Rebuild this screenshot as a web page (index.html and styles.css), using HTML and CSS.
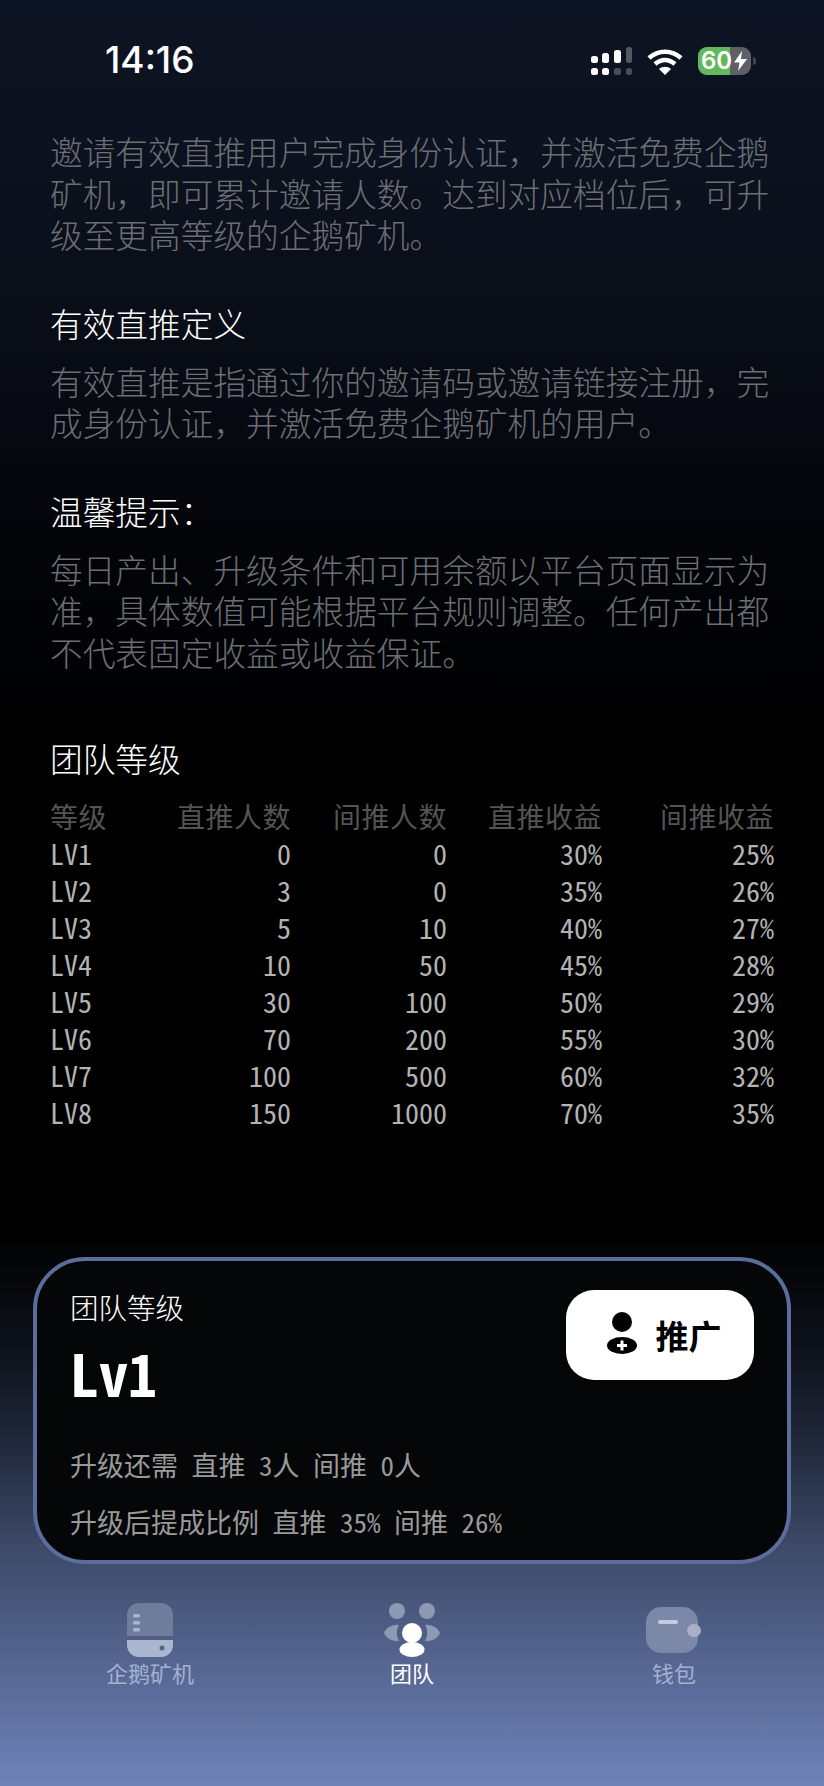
FILE: index.html
```html
<!DOCTYPE html>
<html lang="zh-CN">
<head>
    <meta charset="UTF-8">
    <meta name="viewport" content="width=device-width, initial-scale=1.0">
    <title>团队等级</title>
    <link rel="stylesheet" href="styles.css">
</head>
<body>

<!-- Status bar -->
<header class="status-bar">
    <span class="time">14:16</span>
    <div class="status-icons">
        <svg class="signal" width="42" height="29" viewBox="0 0 42 29">
            <rect x="0" y="9" width="7" height="7" rx="2.5" fill="#fff"/>
            <rect x="11" y="6" width="7" height="10" rx="2.5" fill="#fff"/>
            <rect x="23" y="3" width="7" height="13" rx="2.5" fill="#fff"/>
            <rect x="35" y="0" width="6" height="16" rx="2.5" fill="#555862"/>
            <rect x="0" y="21" width="7" height="7" rx="2.5" fill="#fff"/>
            <rect x="11" y="21" width="7" height="7" rx="2.5" fill="#fff"/>
            <rect x="23" y="21" width="7" height="7" rx="2.5" fill="#4a4d56"/>
            <rect x="35" y="21" width="6" height="7" rx="2.5" fill="#4a4d56"/>
        </svg>
        <svg class="wifi" width="36" height="27" viewBox="0 0 36 27">
            <path d="M2 10 C11 1.500 25 1.500 34 10" fill="none" stroke="#fff" stroke-width="4.500"/>
            <path d="M8 16 C14 10.500 22 10.500 28 16" fill="none" stroke="#fff" stroke-width="4.500"/>
            <path d="M12 21 L18 27 L24 21 C20.500 18 15.500 18 12 21 Z" fill="#fff"/>
        </svg>
        <div class="battery">
            <div class="battery-level">60</div>
            <svg class="bolt" width="13" height="20" viewBox="0 0 13 20">
                <path d="M8 0 L0 11.500 H5.500 L4 20 L13 8 H7 Z" fill="#fff"/>
            </svg>
        </div>
        <span class="battery-nub"></span>
    </div>
</header>

<!-- Rules text -->
<main class="content">
    <p class="para">邀请有效直推用户完成身份认证，并激活免费企鹅矿机，即可累计邀请人数。达到对应档位后，可升级至更高等级的企鹅矿机。</p>

    <h3 class="sub-title">有效直推定义</h3>
    <p class="para">有效直推是指通过你的邀请码或邀请链接注册，完成身份认证，并激活免费企鹅矿机的用户。</p>

    <h3 class="sub-title">温馨提示：</h3>
    <p class="para">每日产出、升级条件和可用余额以平台页面显示为准，具体数值可能根据平台规则调整。任何产出都不代表固定收益或收益保证。</p>

    <h3 class="table-title">团队等级</h3>
    <div class="level-table">
        <div class="row head"><span>等级</span><span>直推人数</span><span>间推人数</span><span>直推收益</span><span>间推收益</span></div>
        <div class="row"><span>LV1</span><span>0</span><span>0</span><span>30%</span><span>25%</span></div>
        <div class="row"><span>LV2</span><span>3</span><span>0</span><span>35%</span><span>26%</span></div>
        <div class="row"><span>LV3</span><span>5</span><span>10</span><span>40%</span><span>27%</span></div>
        <div class="row"><span>LV4</span><span>10</span><span>50</span><span>45%</span><span>28%</span></div>
        <div class="row"><span>LV5</span><span>30</span><span>100</span><span>50%</span><span>29%</span></div>
        <div class="row"><span>LV6</span><span>70</span><span>200</span><span>55%</span><span>30%</span></div>
        <div class="row"><span>LV7</span><span>100</span><span>500</span><span>60%</span><span>32%</span></div>
        <div class="row"><span>LV8</span><span>150</span><span>1000</span><span>70%</span><span>35%</span></div>
    </div>
</main>

<!-- Level card -->
<section class="level-card">
    <div class="card-top">
        <div>
            <div class="card-label">团队等级</div>
            <div class="card-level">Lv1</div>
        </div>
        <button class="promote-btn">
            <svg width="32" height="46" viewBox="0 0 32 46">
                <circle cx="16" cy="10" r="10" fill="#000"/>
                <ellipse cx="16" cy="33.500" rx="15" ry="8.500" fill="#000"/>
                <path d="M16 28.500 V38.500 M11 33.500 H21" stroke="#fff" stroke-width="3"/>
            </svg>
            <span>推广</span>
        </button>
    </div>
    <p class="card-line">升级还需 直推 3人 间推 0人</p>
    <p class="card-line">升级后提成比例 直推 35% 间推 26%</p>
</section>

<!-- Tab bar -->
<nav class="tabs">
    <a class="tab">
        <svg width="46" height="54" viewBox="0 0 46 54">
            <path d="M12 0 H34 A12 12 0 0 1 46 12 V33 H0 V12 A12 12 0 0 1 12 0 Z" fill="#6f7c9c"/>
            <path d="M0 37 H46 V42 A12 12 0 0 1 34 54 H12 A12 12 0 0 1 0 42 Z" fill="#aab6cf"/>
            <rect x="6" y="11" width="7" height="3.500" rx="1.500" fill="#aab6cf"/>
            <rect x="6" y="18" width="7" height="3.500" rx="1.500" fill="#aab6cf"/>
            <rect x="6" y="25" width="7" height="3.500" rx="1.500" fill="#aab6cf"/>
            <circle cx="35" cy="45" r="2.500" fill="#566487"/>
        </svg>
        <span>企鹅矿机</span>
    </a>
    <a class="tab active">
        <svg width="56" height="54" viewBox="0 0 56 54">
            <circle cx="13" cy="8" r="8" fill="#8e99b3"/>
            <circle cx="43" cy="8" r="8" fill="#8e99b3"/>
            <path d="M15 22 C8 21 2 25 0 30 C2 35 8 39 15 38 C12 33 12 27 15 22 Z" fill="#8e99b3"/>
            <path d="M41 22 C48 21 54 25 56 30 C54 35 48 39 41 38 C44 33 44 27 41 22 Z" fill="#8e99b3"/>
            <circle cx="28" cy="30" r="10" fill="#fff"/>
            <ellipse cx="28" cy="46.500" rx="12.500" ry="7.500" fill="#fff"/>
        </svg>
        <span>团队</span>
    </a>
    <a class="tab">
        <svg width="56" height="54" viewBox="0 0 56 54">
            <rect x="0" y="4" width="52" height="46" rx="15" fill="#7b88a8"/>
            <rect x="12" y="17" width="20" height="4" rx="2" fill="#c4cde0"/>
            <rect x="41" y="21" width="14" height="13" rx="6.500" fill="#a9afc8"/>
        </svg>
        <span>钱包</span>
    </a>
</nav>

</body>
</html>
```

FILE: styles.css
```css
/* General */
* {
    margin: 0;
    padding: 0;
    box-sizing: border-box;
}

body {
    width: 824px;
    height: 1786px;
    overflow: hidden;
    font-family: "Noto Sans CJK SC", sans-serif;
    color: #fff;
    background: linear-gradient(180deg, #0d1423 0, #0a0f1a 280px, #030408 560px, #000 760px, #000 1230px, #0c1018 1340px, #1f2739 1440px, #3d4a69 1550px, #55658f 1660px, #6f82b8 1786px);
}

/* Status bar */
.status-bar {
    height: 100px;
    padding: 40px 0 0 105px;
    display: flex;
    justify-content: space-between;
    align-items: flex-start;
}

.time {
    font-family: Inter, sans-serif;
    font-size: 37px;
    font-weight: 500;
    line-height: 40px;
}

.status-icons {
    display: flex;
    align-items: flex-start;
    margin-right: 68px;
    padding-top: 7px;
}

.signal {
    margin-right: 14px;
}

.wifi {
    margin: 1px 15px 0 0;
}

.battery {
    position: relative;
    width: 53px;
    height: 28px;
    border-radius: 9px;
    overflow: hidden;
    background: #5f5f68;
}

.battery-level {
    width: 32px;
    height: 28px;
    background: #62b85a;
    font-family: Inter, sans-serif;
    font-size: 24px;
    font-weight: 600;
    line-height: 28px;
    padding-left: 3px;
    white-space: nowrap;
}

.bolt {
    position: absolute;
    left: 36px;
    top: 4px;
}

.battery-nub {
    width: 3px;
    height: 8px;
    margin: 10px 0 0 2px;
    border-radius: 0 3px 3px 0;
    background: #44464e;
}

/* Rules text */
.content {
    padding: 30px 50px 0;
}

.para {
    width: 724px;
    font-size: 32.7px;
    font-weight: 300;
    line-height: 41.5px;
    color: #6b6e74;
}

.sub-title {
    font-size: 32.7px;
    font-weight: 300;
    line-height: 42px;
    margin-top: 47px;
    margin-bottom: 16px;
}

.table-title {
    font-size: 32.7px;
    font-weight: 300;
    line-height: 42px;
    margin-top: 65px;
}

/* Level table */
.level-table {
    margin-top: 19px;
    width: 724px;
    font-family: "Noto Sans Mono CJK SC", "DejaVu Sans Mono", monospace;
    font-size: 28px;
}

.row {
    display: grid;
    grid-template-columns: 80px 161px 156px 155px 172px;
    height: 37px;
    line-height: 37px;
    color: #b3b3b3;
}

.row span {
    text-align: right;
}

.row span:first-child {
    text-align: left;
}

.row.head {
    letter-spacing: 0.5px;
    color: #545454;
}

/* Level card */
.level-card {
    margin: 126px 0 0 33px;
    width: 758px;
    height: 307px;
    padding: 29px 33px 0;
    border: 4px solid #5a6d9b;
    border-radius: 52px;
    background: #050608;
}

.card-top {
    display: flex;
    justify-content: space-between;
    align-items: flex-start;
}

.card-label {
    font-size: 28.5px;
    font-weight: 300;
    line-height: 30px;
    margin-top: 2px;
}

.card-level {
    font-family: "Noto Sans Mono CJK SC", "DejaVu Sans Mono", monospace;
    font-size: 58px;
    font-weight: 700;
    line-height: 70px;
    margin-top: 15px;
}

.promote-btn {
    width: 188px;
    height: 90px;
    padding-left: 7px;
    border: none;
    border-radius: 28px;
    background: #fff;
    color: #000;
    font-family: "Noto Sans CJK SC", sans-serif;
    font-size: 33px;
    font-weight: 700;
    display: flex;
    align-items: center;
    justify-content: center;
    gap: 18px;
    cursor: pointer;
}

.card-line {
    font-family: "Noto Sans Mono CJK SC", "DejaVu Sans Mono", monospace;
    font-size: 27px;
    line-height: 40px;
    color: #9a9a9a;
    margin-bottom: 17px;
}

.card-top + .card-line {
    margin-top: 38px;
}

/* Tab bar */
.tabs {
    display: grid;
    grid-template-columns: repeat(3, 262px);
    padding: 39px 19px 0;
}

.tab {
    display: flex;
    flex-direction: column;
    align-items: center;
    font-size: 22px;
    line-height: 30px;
    color: #a3b1d3;
}

.tab.active {
    color: #fff;
}
```
